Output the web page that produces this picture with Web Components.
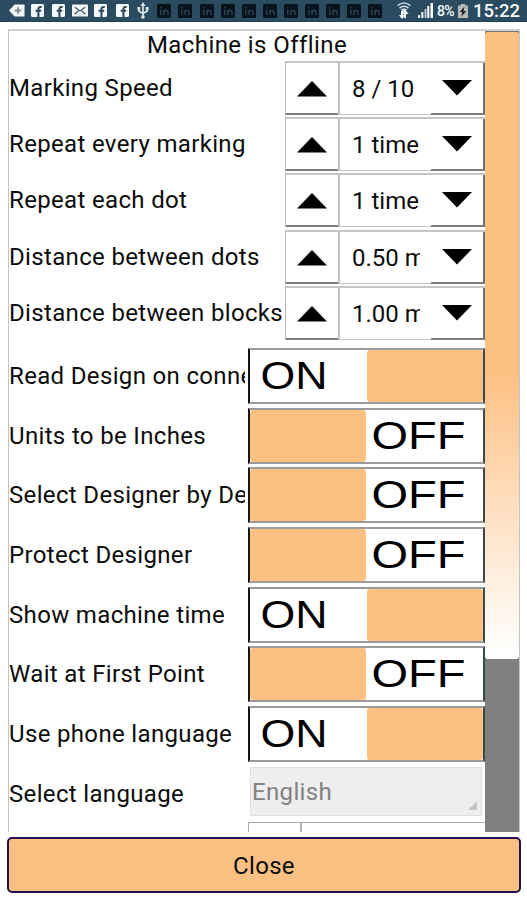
<!DOCTYPE html>
<html lang="en">
<head>
<meta charset="utf-8">
<title>Machine settings</title>
<style>
  body {
    margin: 0;
    background: #fff;
    color: #0c0c0c;
    font-family: Roboto, "Liberation Sans", sans-serif;
    font-size: 24px;
    overflow: hidden;
  }
</style>
</head>
<body>
<settings-screen></settings-screen>

<script>
const facebook = `<svg width="13" height="13" viewBox="0 0 14 14"><path fill="#f4f8fa" d="M1 0h12l1 1v12l-1 1H1l-1-1V1z"/><path fill="none" stroke="#24485e" stroke-width="2.200" d="M8 14V5.500Q8 3 11.500 3.300M5 7.200h6"/></svg>`;
const linkedin = `<svg width="14" height="14" viewBox="0 0 14 14"><rect width="14" height="14" rx="1.500" fill="#07141d"/><path fill="none" stroke="#2a4252" stroke-width="1.500" d="M3.800 6v5M3.800 3v1.600M7 11V6M7 8.300q.2-1.800 2-1.800t2 1.800V11"/></svg>`;
const icons = {
  facebook,
  linkedin,
  back: `<svg width="16" height="13" viewBox="0 0 17 13"><path fill="#f4f8fa" d="M6 0h9.500q1 0 1 1v11q0 1-1 1H6L0 6.500z"/><path stroke="#7c8b94" stroke-width="2" d="M6 6.500h7M9.500 3v7"/></svg>`,
  mail: `<svg width="16" height="13" viewBox="0 0 17 13"><rect width="17" height="13" rx="1" fill="#f4f8fa"/><path fill="none" stroke="#34566a" stroke-width="1.300" d="M3 3l5.500 4L14 3M3 10.500L6.500 7M14 10.500L10.500 7"/></svg>`,
  usb: `<svg width="12" height="17" viewBox="0 0 12 17"><path fill="none" stroke="#dde5e9" stroke-width="1.700" d="M6 3v12M1.800 6v3L6 11.500 10.200 9V6"/><path fill="#dde5e9" d="M6 0l2.500 4h-5zM.5 5h2.800v3H.5zM8.700 5h2.800v3H8.700z"/><circle cx="6" cy="15" r="1.800" fill="#dde5e9"/></svg>`,
  wifi: `<svg width="14" height="17" viewBox="0 0 14 17"><path fill="none" stroke="#c4d2d9" stroke-width="1.600" d="M.7 3.500Q7-1.500 13.300 3.500M2.500 6Q7 2.500 11.500 6"/><path fill="#dce6eb" d="M4 7.500Q7 5.500 10 7.500L7 11z"/><path fill="#fff" d="M4 9h2v4h2l-3 4-3-4h2zM9 16h-2v-4H5.500L8.500 8l3 4H9z"/></svg>`,
  signal: `<svg width="15" height="15" viewBox="0 0 15 15"><path fill="#e8eff2" d="M0 12h2v3H0zM3.200 9h2.200v6H3.200z"/><path fill="#b9c7cf" d="M6.500 6h2v9h-2z"/><path fill="#fff" d="M9.300 3h2v12h-2zM12.500 0H15v15h-2.500z"/></svg>`,
  battery: `<svg width="10" height="14" viewBox="0 0 9 14" preserveAspectRatio="none"><path fill="#b8b9b6" d="M2.500 0h4v1.500H9V14H0V1.500h2.500z"/><path fill="#1c2327" d="M5.800 2.500L1.500 8h2.300L3 12.500 7.500 7H5z"/></svg>`
};

class StatusBar extends HTMLElement {
  constructor() {
    super();
    this.attachShadow({ mode: "open" });
    const left = ["back", "facebook", "facebook", "mail", "facebook", "facebook", "usb", ...Array(11).fill("linkedin")];
    this.shadowRoot.innerHTML = `
      <style>
        :host {
          display: flex;
          align-items: center;
          box-sizing: border-box;
          height: 22px;
          padding-left: 6px;
          background: #2b4c60;
          border-bottom: 1px solid #1b4054;
          color: #f6fafb;
          line-height: 22px;
          white-space: nowrap;
        }
        svg {
          display: block;
          flex: none;
        }
        .cell {
          width: 21.120px;
          flex: none;
          display: flex;
          justify-content: center;
        }
        .wifi { margin-left: 11px; }
        .signal { margin-left: 7px; }
        .percent {
          width: 21px;
          margin-left: 4px;
          font-size: 14px;
          font-weight: 500;
          letter-spacing: -.8px;
        }
        .time {
          margin-left: 5px;
          font-size: 18.500px;
          font-weight: 500;
        }
      </style>
      ${left.map((name) => `<span class="cell">${icons[name]}</span>`).join("")}
      <span class="wifi">${icons.wifi}</span>
      <span class="signal">${icons.signal}</span>
      <span class="percent">8%</span>
      ${icons.battery}
      <span class="time">15:22</span>
    `;
  }
}
customElements.define("status-bar", StatusBar);

class SettingRow extends HTMLElement {
  constructor() {
    super();
    this.attachShadow({ mode: "open" });
    this.shadowRoot.innerHTML = `
      <style>
        :host {
          display: flex;
          height: var(--row-height);
          flex: none;
        }
        .label {
          flex: 1;
          min-width: 0;
          margin-right: var(--label-gap);
          overflow: hidden;
          white-space: nowrap;
          line-height: var(--label-line);
          letter-spacing: .34px;
        }
      </style>
      <span class="label">${this.getAttribute("label")}</span>
      <slot></slot>
    `;
  }
}
customElements.define("setting-row", SettingRow);

class ValueStepper extends HTMLElement {
  constructor() {
    super();
    this.attachShadow({ mode: "open" });
    this.shadowRoot.innerHTML = `
      <style>
        :host {
          display: flex;
          box-sizing: border-box;
          width: 200px;
          height: 54px;
          border-top: 2px solid #c6c6c6;
          border-left: 1px solid #b5b5b5;
        }
        .up, .down {
          box-sizing: border-box;
          flex: none;
          display: flex;
          align-items: center;
          justify-content: center;
          border-bottom: 2px solid #7d7d7d;
        }
        .up {
          width: 52px;
          padding-top: 2px;
        }
        .down {
          width: 54px;
          border-right: 2px solid #6e6e6e;
        }
        .value {
          box-sizing: border-box;
          flex: 1;
          min-width: 0;
          display: flex;
          border-left: 2px solid #c0c0c0;
          border-bottom: 1px solid #c4c4c4;
          padding: 0 11px 0 12px;
          line-height: 52px;
        }
        .value span {
          overflow: hidden;
          white-space: nowrap;
        }
      </style>
      <div class="up"><svg width="30" height="16"><path d="M0 15.500L15 0l15 15.500z"/></svg></div>
      <div class="value"><span>${this.getAttribute("value")}</span></div>
      <div class="down"><svg width="30" height="16"><path d="M0 0h30L15 15.500z"/></svg></div>
    `;
  }
}
customElements.define("value-stepper", ValueStepper);

class ToggleSwitch extends HTMLElement {
  constructor() {
    super();
    this.attachShadow({ mode: "open" });
    const on = this.hasAttribute("on");
    this.shadowRoot.innerHTML = `
      <style>
        :host {
          display: flex;
          flex-direction: ${on ? "row" : "row-reverse"};
          box-sizing: border-box;
          width: 237px;
          height: 56px;
          border: 2px solid;
          border-color: #9b9b9b #3c4749 #9b9b9b #151515;
        }
        .thumb {
          width: 116px;
          flex: none;
          border-radius: 3px;
          background: #fdc083;
        }
        svg {
          display: block;
          flex: 1;
          min-width: 0;
          height: 52px;
          overflow: visible;
        }
        text {
          font-family: "Liberation Sans", Arial, sans-serif;
          font-size: 39px;
        }
      </style>
      <svg><text x="${on ? 10.500 : 5.500}" y="38.500" textLength="${on ? 67 : 94}" lengthAdjust="spacingAndGlyphs">${on ? "ON" : "OFF"}</text></svg>
      <div class="thumb"></div>
    `;
  }
}
customElements.define("toggle-switch", ToggleSwitch);

class LanguageSelect extends HTMLElement {
  constructor() {
    super();
    this.attachShadow({ mode: "open" });
    this.shadowRoot.innerHTML = `
      <style>
        :host {
          display: flex;
          align-items: flex-end;
          justify-content: space-between;
          box-sizing: border-box;
          width: 232px;
          height: 49px;
          margin: 1px 3px 0 0;
          padding: 0 4px 5px 1px;
          border: 1px solid #dfdfdf;
          background: #eeeeee;
          color: #828282;
        }
        span {
          line-height: 36px;
          letter-spacing: .34px;
        }
      </style>
      <span><slot></slot></span>
      <svg width="9" height="9"><path fill="#bdc3c7" d="M9 0v9H0z"/></svg>
    `;
  }
}
customElements.define("language-select", LanguageSelect);

class ScrollTrack extends HTMLElement {
  constructor() {
    super();
    this.attachShadow({ mode: "open" });
    this.shadowRoot.innerHTML = `
      <style>
        :host {
          display: block;
          box-sizing: border-box;
          width: 35px;
          flex: none;
          background: #808080;
          border-right: 1px solid #c4c4c4;
        }
        .thumb {
          height: 628px;
          box-sizing: border-box;
          border-top: 1px solid #77706e;
          border-radius: 3px;
          background: linear-gradient(#fdc083 0%, #fdc083 54%, #fff 99%);
        }
      </style>
      <div class="thumb"></div>
    `;
  }
}
customElements.define("scroll-track", ScrollTrack);

class CloseButton extends HTMLElement {
  constructor() {
    super();
    this.attachShadow({ mode: "open" });
    this.shadowRoot.innerHTML = `
      <style>
        :host {
          display: block;
          box-sizing: border-box;
          height: 56px;
          margin: 5px 6px 0 7px;
          border: 2px solid #22104f;
          border-radius: 5px;
          background: #fdc083;
          text-align: center;
          line-height: 54px;
          letter-spacing: .3px;
        }
      </style>
      <slot></slot>
    `;
  }
}
customElements.define("close-button", CloseButton);

class SettingsScreen extends HTMLElement {
  constructor() {
    super();
    this.attachShadow({ mode: "open" });
    this.shadowRoot.innerHTML = `
      <style>
        :host {
          display: flex;
          flex-direction: column;
          height: 900px;
        }
        .panel {
          display: flex;
          box-sizing: border-box;
          height: 803px;
          margin: 7px 7px 0 8px;
          border-top: 2px solid #cfcfcf;
          border-left: 1px solid #c4c4c4;
          overflow: hidden;
        }
        .list {
          flex: 1;
          min-width: 0;
        }
        .title {
          height: 30px;
          line-height: 29px;
          letter-spacing: .42px;
          text-align: center;
        }
        .steppers {
          --row-height: 56.200px;
          --label-gap: 1px;
          --label-line: 54px;
          height: 287px;
        }
        .toggles {
          --row-height: 59.700px;
          --label-gap: 3px;
          --label-line: 56px;
        }
        .next {
          display: flex;
          box-sizing: border-box;
          width: 237px;
          height: 12px;
          margin: -4px 0 0 auto;
          border-top: 1px solid #aaa;
          border-left: 1px solid #aaa;
        }
        .next i {
          width: 51px;
          border-right: 2px solid #b5b5b5;
        }
      </style>
      <status-bar></status-bar>
      <div class="panel">
        <div class="list">
          <div class="title">Machine is Offline</div>
          <div class="steppers">
            <setting-row label="Marking Speed"><value-stepper value="8 / 10"></value-stepper></setting-row>
            <setting-row label="Repeat every marking"><value-stepper value="1 time"></value-stepper></setting-row>
            <setting-row label="Repeat each dot"><value-stepper value="1 time"></value-stepper></setting-row>
            <setting-row label="Distance between dots"><value-stepper value="0.50 mm"></value-stepper></setting-row>
            <setting-row label="Distance between blocks"><value-stepper value="1.00 mm"></value-stepper></setting-row>
          </div>
          <div class="toggles">
            <setting-row label="Read Design on connect"><toggle-switch on></toggle-switch></setting-row>
            <setting-row label="Units to be Inches"><toggle-switch></toggle-switch></setting-row>
            <setting-row label="Select Designer by Default"><toggle-switch></toggle-switch></setting-row>
            <setting-row label="Protect Designer"><toggle-switch></toggle-switch></setting-row>
            <setting-row label="Show machine time"><toggle-switch on></toggle-switch></setting-row>
            <setting-row label="Wait at First Point"><toggle-switch></toggle-switch></setting-row>
            <setting-row label="Use phone language"><toggle-switch on></toggle-switch></setting-row>
            <setting-row label="Select language"><language-select>English</language-select></setting-row>
          </div>
          <div class="next"><i></i></div>
        </div>
        <scroll-track></scroll-track>
      </div>
      <close-button>Close</close-button>
    `;
  }
}
customElements.define("settings-screen", SettingsScreen);
</script>
</body>
</html>
